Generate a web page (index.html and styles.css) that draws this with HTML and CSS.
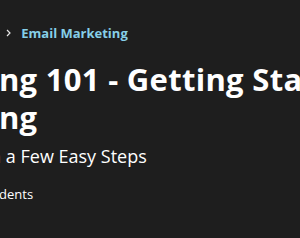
FILE: index.html
```html
<!DOCTYPE html>
<html lang="en">
<head>
<meta charset="utf-8">
<title>Email Marketing 101</title>
<link rel="stylesheet" href="styles.css">
</head>
<body>
<div class="viewport">
  <div class="header">
    <nav class="crumbs">
      <a class="crumb" href="#">Marketing</a>
      <svg class="chev" width="5" height="8" viewBox="0 0 5 8"><path d="M1 1l3 3-3 3" fill="none" stroke="#e6e6e6" stroke-width="1.2"/></svg>
      <a class="crumb" href="#">Digital Marketing</a>
      <svg class="chev" width="5" height="8" viewBox="0 0 5 8"><path d="M1 1l3 3-3 3" fill="none" stroke="#e6e6e6" stroke-width="1.2"/></svg>
      <a class="crumb" href="#">Email Marketing</a>
    </nav>
    <h1 class="title">Email Marketing 101 - Getting Started with Email Marketing</h1>
    <p class="subtitle">Learn Email Marketing in a Few Easy Steps</p>
    <div class="meta">
      <span class="rating">4.4</span>
      <span class="stars">★★★★☆</span>
      <span class="count">(204 ratings)</span>
      <span class="students">976 students</span>
    </div>
  </div>
</div>
</body>
</html>
```
FILE: styles.css
```css
html, body {
  margin: 0;
  padding: 0;
  background: #1e1e1e;
}
body {
  font-family: "Open Sans", "Liberation Sans", sans-serif;
  color: #ffffff;
}
.viewport {
  width: 300px;
  height: 238px;
  overflow: hidden;
}
.header {
  margin-left: -210px;
  padding-top: 24px;
  width: 760px;
}
.crumbs {
  display: flex;
  align-items: center;
  gap: 10px;
  padding-left: 1px;
  height: 18px;
  font-size: 13px;
  font-weight: 700;
  line-height: 18px;
}
.crumb {
  color: #86cfe8;
  text-decoration: none;
}
.chev {
  display: block;
}
.title {
  margin: 18px 0 0 -11px;
  width: 750px;
  font-size: 31px;
  font-weight: 700;
  letter-spacing: 0.3px;
  line-height: 38px;
}
.subtitle {
  margin: 8px 0 0;
  padding-left: 3px;
  font-size: 18px;
  line-height: 24px;
}
.meta {
  display: flex;
  gap: 4px;
  margin-top: 17px;
  margin-left: -1px;
  font-size: 13px;
  line-height: 18px;
}
.rating {
  color: #f3ca8c;
  font-weight: 700;
}
.stars {
  color: #f69c08;
}
.count {
  color: #c0c4fc;
  text-decoration: underline;
}
```
